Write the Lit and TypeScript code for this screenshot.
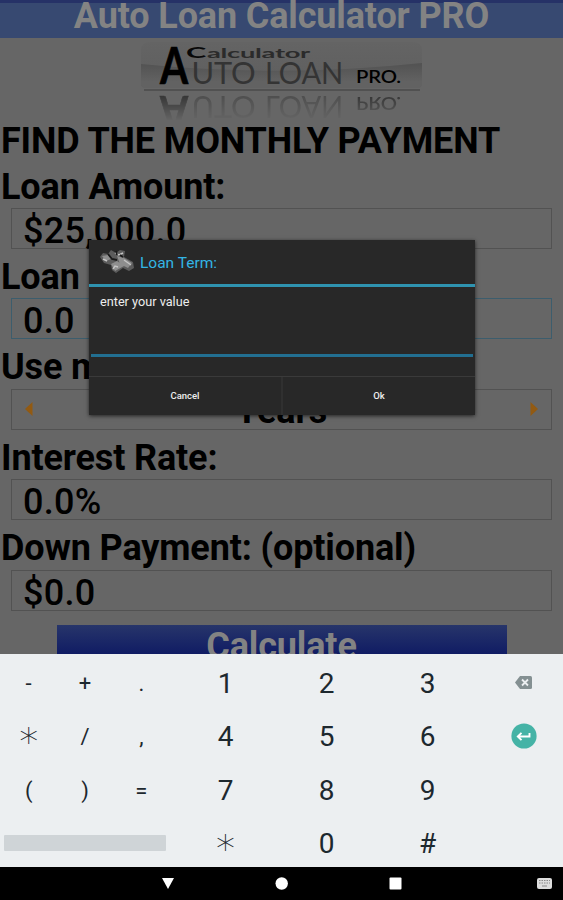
import { LitElement, html, css, svg } from "lit";
import { customElement } from "lit/decorators.js";

@customElement("loan-logo")
class LoanLogo extends LitElement {
  static styles = css`
    :host { display: block; height: 82px; }
    svg { display: block; margin: 0 auto; }
    .thin { font-family: Lato, sans-serif; font-weight: 400; fill: #343434; }
    .dark { font-family: Lato, sans-serif; font-weight: 700; fill: #000; stroke: #000; stroke-width: 0.7px; }
    .medium { font-family: Lato, sans-serif; font-weight: 600; fill: #000; }
    .wide { font-family: Lato, sans-serif; fill: #2b2b2b; }
    .initial { font-family: Lato, sans-serif; font-weight: 700; fill: #080808; }
  `;
  words() {
    return svg`
      <text class="dark" x="19" y="46" font-size="51" textLength="28" lengthAdjust="spacingAndGlyphs">A</text>
      <text class="thin" x="50.500" y="46" font-size="31" textLength="64" lengthAdjust="spacingAndGlyphs">UTO</text>
      <text class="thin" x="124" y="46" font-size="31" textLength="78" lengthAdjust="spacingAndGlyphs">LOAN</text>
      <text class="medium" x="215" y="45" font-size="17" textLength="45" lengthAdjust="spacingAndGlyphs">PRO.</text>`;
  }
  render() {
    return html`<svg width="281" height="82" viewBox="0 0 281 82">
      <defs>
        <linearGradient id="plate" x1="0" y1="0" x2="0" y2="1">
          <stop offset="0" stop-color="#646464" /><stop offset="1" stop-color="#5e5e5e" />
        </linearGradient>
        <linearGradient id="swoosh" x1="0" y1="0" x2="0" y2="1">
          <stop offset="0" stop-color="#525252" /><stop offset="0.75" stop-color="#626262" />
        </linearGradient>
        <linearGradient id="fade" x1="0" y1="0" x2="0" y2="1">
          <stop offset="0" stop-color="#fff" stop-opacity="0.5" /><stop offset="1" stop-color="#fff" stop-opacity="0" />
        </linearGradient>
        <mask id="mirror"><rect x="0" y="56" width="281" height="27" fill="url(#fade)" /></mask>
      </defs>
      <path d="M0 12Q0 4 10 4H271Q281 4 281 12V46Q281 50 276 50H5Q0 50 0 46Z" fill="url(#plate)" />
      <path d="M0 26Q140 40 281 25V46Q281 50 276 50H5Q0 50 0 46Z" fill="url(#swoosh)" />
      <rect x="3" y="51" width="276" height="2" fill="#515151" />
      ${this.words()}
      <text class="initial" x="45" y="20" font-size="15.500" textLength="20" lengthAdjust="spacingAndGlyphs">C</text>
      <text class="wide" x="66" y="20" font-size="13" textLength="103" lengthAdjust="spacingAndGlyphs">alculator</text>
      <g mask="url(#mirror)"><g transform="translate(0 104) scale(1 -1)">${this.words()}</g></g>
    </svg>`;
  }
}

@customElement("entry-dialog")
class EntryDialog extends LitElement {
  static styles = css`
    :host { display: flex; flex-direction: column; width: 386px; height: 175px; background: #282828; line-height: normal;
      box-shadow: 0 1px 4px rgba(0, 0, 0, 0.65); color: #eee; font-family: Roboto, sans-serif; }
    header { display: flex; align-items: center; height: 44px; padding-left: 10px; gap: 5px; color: #33b5e5; font-size: 15.5px; }
    header span { padding-top: 2px; }
    .rule { height: 3px; background: #2f93b0; }
    .body { height: 89px; padding: 0 2px; }
    .field { height: 70px; box-sizing: border-box; padding: 7px 9px; border-bottom: 3px solid #226f91; font-size: 12.7px; line-height: 16px; }
    .actions { display: flex; flex: 1; border-top: 1px solid #3a3a3a; }
    .action { flex: 1; display: flex; align-items: center; justify-content: center; font-size: 9.5px; font-weight: 500; padding-bottom: 1px; }
    .action + .action { border-left: 2px solid #303030; }
  `;
  render() {
    return html`
      <header>
        <svg width="36" height="28" viewBox="0 0 36 28">
          <path d="M1 9L4 5L9 6L12 2L17 5L21 2L26 3L25 9L34 14L35 20L30 23L24 20L17 25L13 22L12 17L5 15Z" fill="#5c5c5c" />
          <path d="M3 8L9 7L12 11L7 13ZM18 8L25 10L33 15L29 20L21 16ZM12 16L18 13L25 18L16 23Z" fill="#8e8e8e" />
          <path d="M4 11L8 13M16 5L20 7L24 5M14 21L16 18L19 19M25 12L32 17" stroke="#c4c4c4" stroke-width="1.400" fill="none" />
          <path d="M9 6L13 11L18 12M17 3L18 7M21 7L24 9" stroke="#1a1a1a" stroke-width="1.800" fill="none" />
        </svg>
        <span>Loan Term:</span>
      </header>
      <div class="rule"></div>
      <div class="body"><div class="field">enter your value</div></div>
      <div class="actions"><div class="action">Cancel</div><div class="action">Ok</div></div>`;
  }
}

const SYMBOLS = ["-", "+", ".", "*", "/", ",", "(", ")", "="];
const DIGITS = ["1", "2", "3", "4", "5", "6", "7", "8", "9", "*", "0", "#"];

@customElement("key-board")
class KeyBoard extends LitElement {
  static styles = css`
    :host { display: grid; grid-template-columns: 169px 6px 303px 85px; height: 213px; box-sizing: border-box; padding-top: 2px;
      background: #eceff1; color: #1d282e; font-family: Roboto, sans-serif; line-height: normal; }
    .grid { display: grid; grid-template-rows: repeat(4, 53.3px); grid-template-columns: repeat(3, 1fr); }
    .key { display: flex; align-items: center; justify-content: center; box-sizing: border-box; padding-top: 2px; }
    .sym { font-size: 22px; }
    .sym .key { padding-left: 1px; }
    .num { grid-column: 3; font-size: 28px; }
    .key.star { font-family: "DejaVu Sans", sans-serif; font-size: 38px; font-weight: 200; line-height: 30px; padding-top: 12px; }
    .space { grid-column: 1 / 4; margin: 19px 3px 18px 4px; background: #cfd4d7; border-radius: 1px; }
    .side { display: grid; grid-template-rows: repeat(4, 53.3px); padding-left: 6px; }
    .side .key { padding-top: 0; }
  `;
  keys(labels: string[]) {
    return labels.map((k) => html`<div class="key ${k === "*" ? "star" : ""}">${k}</div>`);
  }
  render() {
    return html`
      <div class="grid sym">${this.keys(SYMBOLS)}<div class="space"></div></div>
      <div class="grid num">${this.keys(DIGITS)}</div>
      <div class="side">
        <div class="key"><svg width="17" height="13" viewBox="0 0 17 13">
          <path d="M5 0H15.500Q17 0 17 1.500V11.500Q17 13 15.500 13H5L0 6.500Z" fill="#849092" />
          <path d="M7 3.500L13 9.500M13 3.500L7 9.500" stroke="#eceff1" stroke-width="1.800" />
        </svg></div>
        <div class="key"><svg width="26" height="26" viewBox="0 0 26 26">
          <circle cx="13" cy="13" r="12.600" fill="#45b3a6" />
          <path d="M18.500 10V13.500H7M10.500 9.800L6.800 13.500L10.500 17.200" fill="none" stroke="#fff" stroke-width="1.900" />
        </svg></div>
      </div>`;
  }
}

@customElement("app-root")
class AppRoot extends LitElement {
  static styles = css`
    :host { display: flex; flex-direction: column; width: 563px; height: 900px; overflow: hidden; position: relative;
      background: #666; color: #000; font-family: Roboto, sans-serif; font-size: 36px; line-height: 42px; }
    .title { height: 38px; box-sizing: border-box; border-top: 3px solid #263267; background: #374971; color: #838383;
      font-weight: 700; text-align: center; line-height: 27px; letter-spacing: -0.14px; }
    .form { height: 616px; overflow: hidden; font-weight: 700; letter-spacing: -0.14px; }
    .heading { margin-bottom: 3.6px; padding-left: 1px; white-space: nowrap; line-height: 43px; height: 42px; }
    .label { padding-left: 1px; height: 42.4px; line-height: 43px; }
    .term { word-spacing: 2px; }
    .input { box-sizing: border-box; height: 41px; margin: 0 11px 7px; border: 1px solid #525252; padding-left: 11px;
      line-height: 45px; font-weight: 500; letter-spacing: 0.25px; }
    .focus { border-color: #3c5d6d; }
    .spinner { display: flex; align-items: center; justify-content: space-between; padding: 0 13px; font-weight: 700; letter-spacing: 0; }
    .spinner span { padding-top: 5px; }
    .spinner svg { display: block; }
    .calc { width: 450px; height: 60px; margin: 14px auto 0; background: linear-gradient(#27356a, #101c64 29px);
      color: #838383; text-align: center; line-height: 43px; }
    .nav { height: 33px; background: #000; }
    .nav svg { display: block; }
    entry-dialog { position: absolute; left: 89px; top: 240px; letter-spacing: 0; }
  `;
  render() {
    return html`
      <div class="title">Auto Loan Calculator PRO</div>
      <div class="form">
        <loan-logo></loan-logo>
        <div class="heading">FIND THE MONTHLY PAYMENT</div>
        <div class="label">Loan Amount:</div>
        <div class="input">$25,000.0</div>
        <div class="label term">Loan Term:</div>
        <div class="input focus">0.0</div>
        <div class="label">Use months or years:</div>
        <div class="input spinner">
          <svg width="8" height="14"><path d="M7.500 0V14L0 7Z" fill="#925a12" /></svg>
          <span>Years</span>
          <svg width="8" height="14"><path d="M0.500 0V14L8 7Z" fill="#925a12" /></svg>
        </div>
        <div class="label">Interest Rate:</div>
        <div class="input">0.0%</div>
        <div class="label">Down Payment: (optional)</div>
        <div class="input">$0.0</div>
        <div class="calc">Calculate</div>
      </div>
      <key-board></key-board>
      <div class="nav"><svg width="563" height="33" viewBox="0 0 563 33">
        <path d="M162 11H174L168 22Z" fill="#fff" />
        <circle cx="281.700" cy="16.500" r="6.200" fill="#fff" />
        <rect x="389.500" y="10.500" width="12" height="12" rx="1" fill="#fff" />
        <rect x="537" y="11" width="15" height="11" rx="2" fill="#ddd" />
        <path d="M539 13.500H550M539 16H550" stroke="#888" stroke-dasharray="1.500 1" />
        <path d="M542 19H547" stroke="#888" />
      </svg></div>
      <entry-dialog></entry-dialog>`;
  }
}
